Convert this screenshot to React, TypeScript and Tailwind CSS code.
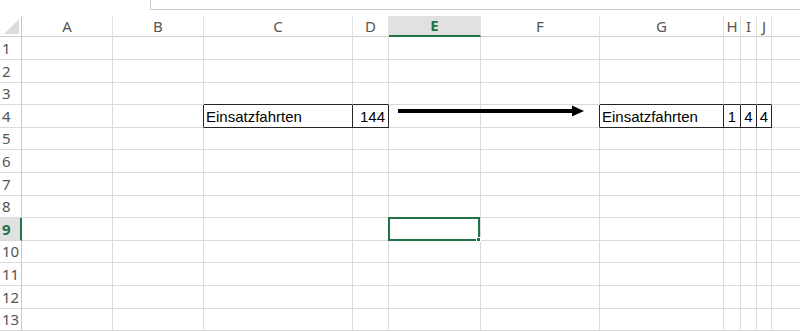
import React from "react";
import clsx from "clsx";

const COLS = ["A", "B", "C", "D", "E", "F", "G", "H", "I", "J", ""];
const ROWS = [1, 2, 3, 4, 5, 6, 7, 8, 9, 10, 11, 12, 13];
const BOXED = [2, 3, 6, 7, 8, 9];
const SEL_COL = 4;
const SEL_ROW = 9;

const CONTENT: Record<string, { text: string; align: "left" | "right" | "center" }> = {
  "4-2": { text: "Einsatzfahrten", align: "left" },
  "4-3": { text: "144", align: "right" },
  "4-6": { text: "Einsatzfahrten", align: "left" },
  "4-7": { text: "1", align: "center" },
  "4-8": { text: "4", align: "center" },
  "4-9": { text: "4", align: "center" },
};

function cellBorders(r: number, c: number) {
  const last = c === COLS.length - 1;
  const boxed = r === 4 && BOXED.includes(c);
  const rightBlack = boxed || (r === 4 && BOXED.includes(c + 1));
  const bottomBlack = (r === 4 || r === 3) && BOXED.includes(c);
  return clsx(
    "border-b",
    !last && "border-r",
    rightBlack ? "border-r-[#262626]" : "border-r-[#dadada]",
    bottomBlack ? "border-b-[#262626]" : "border-b-[#dadada]"
  );
}

function ColumnHeader({ label, index }: { label: string; index: number }) {
  const selected = index === SEL_COL;
  const last = index === COLS.length - 1;
  return (
    <div
      className={clsx(
        "flex items-center justify-center text-[15px]",
        !last && "border-r border-r-[#e2e2e2]",
        selected
          ? "bg-[#e1e1e1] border-b-2 border-b-[#217346] text-[#217346] font-bold"
          : "border-b border-b-[#d0d0d0] text-[#555555]"
      )}
    >
      {label}
    </div>
  );
}

function RowHeader({ row }: { row: number }) {
  const selected = row === SEL_ROW;
  return (
    <div
      className={clsx(
        "flex items-center pl-[2px] text-[15px] border-b border-b-[#dadada]",
        selected
          ? "bg-[#e1e1e1] border-r-2 border-r-[#217346] text-[#217346] font-bold"
          : "border-r border-r-[#c8c8c8] text-[#555555]"
      )}
    >
      {row}
    </div>
  );
}

function Cell({ r, c }: { r: number; c: number }) {
  const content = CONTENT[`${r}-${c}`];
  const selected = r === SEL_ROW && c === SEL_COL;
  return (
    <div
      className={clsx(
        "relative flex items-end text-[15px] leading-[20px] text-black font-['Liberation_Sans',Arial,sans-serif]",
        cellBorders(r, c),
        content?.align === "right" && "justify-end pr-[3px]",
        content?.align === "left" && "justify-start pl-[2px]",
        content?.align === "center" && "justify-center"
      )}
    >
      {content?.text}
      {selected && (
        <div className="absolute -left-[1px] -top-[1px] right-0 -bottom-[1px] z-10 border-2 border-[#217346]">
          <div className="absolute -right-[3px] -bottom-[3px] h-[5px] w-[5px] bg-[#217346] border border-white" />
        </div>
      )}
    </div>
  );
}

export default function App() {
  return (
    <div className="h-[332px] w-[800px] overflow-hidden bg-white font-['Noto_Sans',sans-serif]">
      <div className="h-[16px]">
        <div className="ml-[150px] h-[10px] border-l border-b border-[#c8c8c8]" />
      </div>
      <div className="relative grid grid-cols-[22px_91px_91px_149px_36px_92px_119px_124px_17px_16px_15px_1fr] grid-rows-[21px_23px_23px_22px_23px_22px_23px_23px_22px_23px_22px_23px_23px_22px]">
        <div className="relative border-r border-r-[#c8c8c8] border-b border-b-[#d0d0d0]">
          <svg className="absolute inset-0" width="22" height="21" viewBox="0 0 22 21">
            <polygon points="19,3 19,18 4,18" fill="#dcdcdc" />
          </svg>
        </div>
        {COLS.map((label, i) => (
          <ColumnHeader key={`h${i}`} label={label} index={i} />
        ))}
        {ROWS.map((r) => (
          <React.Fragment key={r}>
            <RowHeader row={r} />
            {COLS.map((_, c) => (
              <Cell key={`${r}-${c}`} r={r} c={c} />
            ))}
          </React.Fragment>
        ))}
        <svg
          className="absolute left-[398px] top-[88px] z-10"
          width="190"
          height="14"
          viewBox="0 0 190 14"
        >
          <line x1="0" y1="7" x2="177" y2="7" stroke="#000" strokeWidth="4" />
          <polygon points="174,1.5 186,7 174,12.5" fill="#000" />
        </svg>
      </div>
    </div>
  );
}
